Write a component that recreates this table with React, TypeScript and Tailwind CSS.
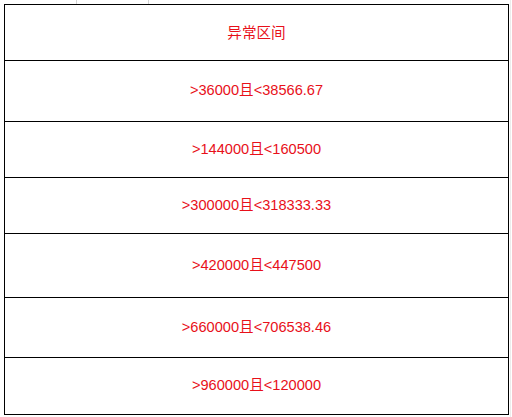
const rows = [
  { label: "异常区间", h: "h-[56px] pt-[3px]" },
  { label: ">36000且<38566.67", h: "h-[61px]" },
  { label: ">144000且<160500", h: "h-[56px]" },
  { label: ">300000且<318333.33", h: "h-[56px]" },
  { label: ">420000且<447500", h: "h-[64px]" },
  { label: ">660000且<706538.46", h: "h-[60px]" },
  { label: ">960000且<120000", h: "h-[56px]" },
];

export default function App() {
  return (
    <div className="relative w-[512px] h-[417px] bg-white overflow-hidden">
      {/* faint spreadsheet gridlines */}
      <div className="absolute left-[76px] top-0 h-[4px] w-px bg-[#d4d4d4]" />
      <div className="absolute left-[148px] top-0 h-[4px] w-px bg-[#d4d4d4]" />
      <div className="absolute left-[510px] top-0 h-[417px] w-px bg-[#ececec]" />

      <div className="pt-[4px] pl-[4px]">
        <div className="w-[505px] border border-black flex flex-col font-['Liberation_Sans','Noto_Sans_CJK_SC',sans-serif] text-[14.6px] text-[#e8101a]">
          {rows.map((r, i) => (
            <div
              key={i}
              className={`${r.h} flex items-center justify-center ${i < rows.length - 1 ? "border-b border-black" : ""}`}
            >
              {r.label}
            </div>
          ))}
        </div>
      </div>
    </div>
  );
}
